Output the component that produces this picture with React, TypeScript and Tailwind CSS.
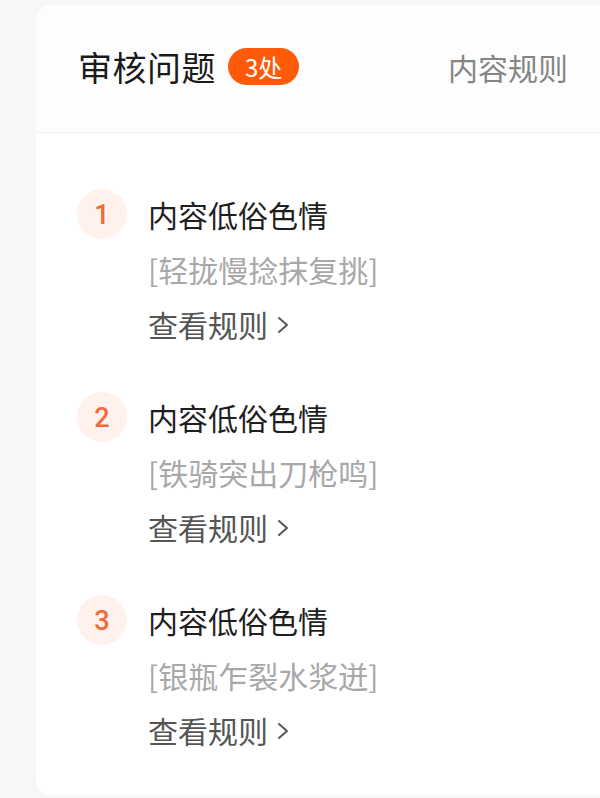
import React from "react";

const items = [
  { n: 1, title: "内容低俗色情", text: "[轻拢慢捻抹复挑]" },
  { n: 2, title: "内容低俗色情", text: "[铁骑突出刀枪鸣]" },
  { n: 3, title: "内容低俗色情", text: "[银瓶乍裂水浆迸]" },
];

function Chevron() {
  return (
    <svg width="14" height="20" viewBox="0 0 14 20" className="ml-[8px] mt-[2px]">
      <path d="M3 3 L11 10 L3 17" fill="none" stroke="#555" strokeWidth="2" strokeLinecap="round" strokeLinejoin="round" />
    </svg>
  );
}

export default function App() {
  return (
    <div
      className="w-[600px] h-[798px] overflow-hidden bg-[#f7f7f7] pl-[36px] pt-[5px]"
      style={{ fontFamily: '"Noto Sans CJK SC", "Noto Sans", sans-serif' }}
    >
      <div className="w-[564px] h-[790px] bg-white rounded-l-[14px] flex flex-col">
        <div className="h-[128px] flex items-center justify-between pl-[42px] pr-[32px] border-b border-[#f0f0f0] bg-[#fdfdfd] rounded-tl-[14px]">
          <div className="flex items-center mt-[-4px]">
            <span className="text-[34px] leading-none text-[#1a1a1a] tracking-[0.5px]">审核问题</span>
            <span className="ml-[12px] h-[37px] px-[17px] rounded-full bg-[#fe5a0a] text-white text-[24px] leading-none flex items-center">
              3处
            </span>
          </div>
          <span className="text-[30px] leading-none text-[#858585] mt-[-4px]">内容规则</span>
        </div>
        <div className="flex flex-col gap-[38px] pt-[53px] pl-[41px]">
          {items.map((it) => (
            <div key={it.n} className="flex">
              <div className="h-[55px] flex items-center">
                <div
                  className="w-[50px] h-[50px] pt-[3px] rounded-full bg-[#fff1eb] flex items-center justify-center text-[27px] text-[#f2693a] font-medium leading-none"
                  style={{ fontFamily: "Roboto, sans-serif" }}
                >
                  {it.n}
                </div>
              </div>
              <div className="ml-[21px] flex flex-col">
                <div className="h-[55px] flex items-center text-[30px] text-[#1f1f1f] leading-none">{it.title}</div>
                <div className="h-[55px] flex items-center text-[30px] text-[#a8a8a8] leading-none">{it.text}</div>
                <div className="h-[55px] flex items-center text-[30px] text-[#555] leading-none">
                  查看规则
                  <Chevron />
                </div>
              </div>
            </div>
          ))}
        </div>
      </div>
    </div>
  );
}
